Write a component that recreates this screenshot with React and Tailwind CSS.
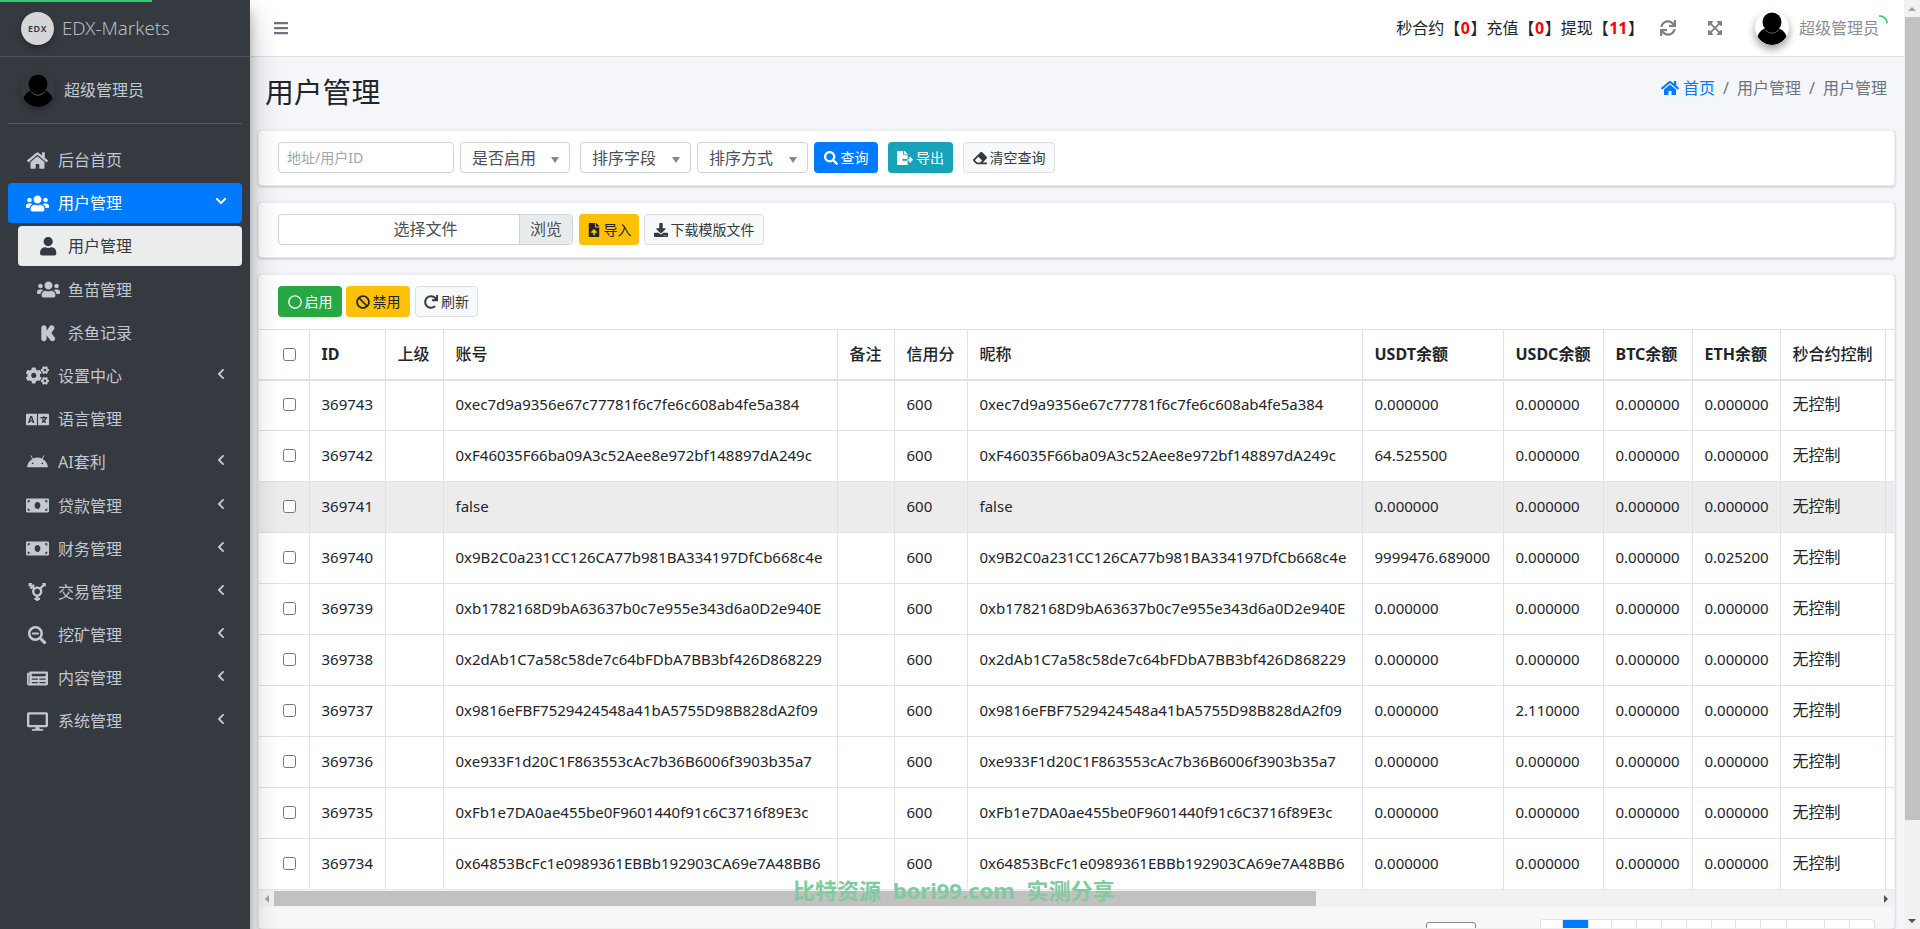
import React from "react";
import {
  FaHome, FaUsers, FaChevronDown, FaChevronLeft, FaUser, FaKickstarterK, FaCogs, FaLanguage, FaAndroid,
  FaMoneyBill, FaTransgenderAlt, FaSearchMinus, FaNewspaper, FaDesktop, FaSearch, FaFileExport, FaEraser,
  FaFileUpload, FaDownload, FaRegCircle, FaBan, FaRedo, FaSync, FaExpandArrowsAlt, FaBars,
} from "react-icons/fa";

function Avatar({ className }) {
  return (
    <svg viewBox="0 0 34 34" className={className}>
      <defs>
        <clipPath id="avclip"><circle cx="17" cy="17" r="17" /></clipPath>
      </defs>
      <g clipPath="url(#avclip)">
        <ellipse cx="17" cy="27" rx="14.5" ry="11" fill="#000" />
        <circle cx="17" cy="11" r="9.5" fill="#000" />
        <path d="M10 18.5c2 2.6 4.400 3.600 7 3.600s5-1 7-3.600" fill="none" stroke="#8a8a8a" strokeWidth="0.7" />
      </g>
    </svg>
  );
}

const iconBox = new Map([
  [FaHome, "w-[21px] h-[21px]"],
  [FaUsers, "w-[23px] h-[23px]"],
  [FaCogs, "w-[23px] h-[23px]"],
  [FaLanguage, "w-[23px] h-[23px]"],
  [FaMoneyBill, "w-[23px] h-[23px]"],
  [FaAndroid, "w-[21px] h-[21px]"],
  [FaNewspaper, "w-[21px] h-[21px]"],
  [FaDesktop, "w-[21px] h-[21px]"],
]);

const Ic = ({ I }) => <I className={iconBox.get(I) || "w-[18.4px] h-[18.4px]"} />;

function NavItem({ icon: I, label, chevron, active }) {
  return (
    <div className={`h-[40px] mb-[3.2px] mx-[8px] rounded-[4px] flex items-center pl-[18px] pr-[15px] ${active ? "bg-[#007bff] text-white" : "text-[#c2c7d0]"}`}>
      <span className="w-[23px] flex justify-center shrink-0"><Ic I={I} /></span>
      <span className="ml-[9px] flex-1 text-[16px] leading-[24px]">{label}</span>
      {chevron === "left" && <FaChevronLeft className="w-[12px] h-[12px] -translate-y-[2px]" />}
      {chevron === "down" && <FaChevronDown className="w-[12px] h-[12px] -translate-y-[2px]" />}
    </div>
  );
}

function SubItem({ icon: I, label, active }) {
  return (
    <div className={`h-[40px] mb-[3.2px] ml-[18px] mr-[8px] rounded-[4px] flex items-center pl-[18px] ${active ? "bg-[#ebedec] text-[#343a40]" : "text-[#c2c7d0]"}`}>
      <span className="w-[24px] flex justify-center shrink-0"><Ic I={I} /></span>
      <span className="ml-[8px] text-[16px] leading-[24px]">{label}</span>
    </div>
  );
}

function Sidebar() {
  return (
    <aside className="w-[250px] shrink-0 bg-[#343a40] relative z-10 shadow-[0_14px_28px_rgba(0,0,0,0.25),0_10px_10px_rgba(0,0,0,0.22)] h-full overflow-hidden">
      <div className="absolute left-0 top-0 h-[2px] w-[152px] bg-[#2ecc71]" />
      <div className="h-[57px] border-b border-[#4b545c] flex items-center pl-[21px]">
        <div className="w-[33px] h-[33px] rounded-full bg-[#d5d6d7] flex items-center justify-center shadow-[0_3px_6px_rgba(0,0,0,0.3)]">
          <span className="text-[9px] leading-none tracking-[0.6px] text-[#333] font-semibold">EDX</span>
        </div>
        <span className="ml-[8px] text-[18.7px] font-light text-[#b8bbbe] leading-[28px]">EDX-Markets</span>
      </div>
      <div className="h-[67px] mx-[8px] border-b border-[#4f5962] flex items-center pl-[13px]">
        <Avatar className="w-[34px] h-[34px] rounded-full shadow-[0_3px_6px_rgba(0,0,0,0.3)]" />
        <span className="ml-[9px] text-[16px] text-[#c2c7d0]">超级管理员</span>
      </div>
      <nav className="pt-[16px]">
        <NavItem icon={FaHome} label="后台首页" />
        <NavItem icon={FaUsers} label="用户管理" chevron="down" active />
        <SubItem icon={FaUser} label="用户管理" active />
        <SubItem icon={FaUsers} label="鱼苗管理" />
        <SubItem icon={FaKickstarterK} label="杀鱼记录" />
        <NavItem icon={FaCogs} label="设置中心" chevron="left" />
        <NavItem icon={FaLanguage} label="语言管理" />
        <NavItem icon={FaAndroid} label="AI套利" chevron="left" />
        <NavItem icon={FaMoneyBill} label="贷款管理" chevron="left" />
        <NavItem icon={FaMoneyBill} label="财务管理" chevron="left" />
        <NavItem icon={FaTransgenderAlt} label="交易管理" chevron="left" />
        <NavItem icon={FaSearchMinus} label="挖矿管理" chevron="left" />
        <NavItem icon={FaNewspaper} label="内容管理" chevron="left" />
        <NavItem icon={FaDesktop} label="系统管理" chevron="left" />
      </nav>
    </aside>
  );
}

function TopBar() {
  const Red = ({ children }) => <b className="text-[#ff0000] font-bold mx-[0.5px]">{children}</b>;
  return (
    <header className="h-[57px] shrink-0 bg-white border-b border-[#dee2e6] flex items-center justify-between relative">
      <FaBars className="ml-[23px] w-[16px] h-[16px] text-[#6c757d]" />
      <div className="flex items-center pr-[25px]">
        <span className="text-[16px] text-[#212529] whitespace-nowrap">秒合约【<Red>0</Red>】充值【<Red>0</Red>】提现【<Red>11</Red>】</span>
        <FaSync className="ml-[16px] w-[16px] h-[16px] text-[#7a8086]" />
        <FaExpandArrowsAlt className="ml-[31px] w-[16px] h-[16px] text-[#7a8086]" />
        <Avatar className="ml-[32px] w-[34px] h-[34px] rounded-full shadow-[0_4px_8px_rgba(0,0,0,0.4)]" />
        <span className="ml-[10px] text-[16px] text-[#8a8f94] whitespace-nowrap">超级管理员</span>
      </div>
      <svg viewBox="0 0 16 16" className="absolute right-[16px] top-[15px] w-[16px] h-[16px]">
        <path d="M7 1.100A7 7 0 0 1 15 8.500" fill="none" stroke="#2ecc71" strokeWidth="1.600" />
      </svg>
    </header>
  );
}

function Select({ label, w }) {
  return (
    <div className={`${w} h-[31px] bg-white border border-[#ced4da] rounded-[4px] flex items-center pl-[11px] pr-[10px] justify-between text-[16px] text-[#495057]`}>
      <span className="whitespace-nowrap">{label}</span>
      <span className="w-0 h-0 border-x-[4px] border-x-transparent border-t-[6px] border-t-[#888] translate-y-[2px]" />
    </div>
  );
}

function Btn({ w, cls, icon: I, iconCls = "w-[14px] h-[14px]", children }) {
  return (
    <div className={`${w} h-[31px] rounded-[4px] flex items-center justify-center gap-[3px] text-[14px] whitespace-nowrap ${cls}`}>
      <I className={iconCls} />
      <span>{children}</span>
    </div>
  );
}

const lightBtn = "bg-[#f8f9fa] border border-[#dcdfe3] text-[#343a40]";

function Card({ className = "", children }) {
  return (
    <div className={`bg-white rounded-[4px] border border-[#eceef0] shadow-[0_1px_3px_rgba(0,0,0,0.22)] ml-[8px] mr-[9px] ${className}`}>{children}</div>
  );
}

const addr = [
  "0xec7d9a9356e67c77781f6c7fe6c608ab4fe5a384",
  "0xF46035F66ba09A3c52Aee8e972bf148897dA249c",
  "false",
  "0x9B2C0a231CC126CA77b981BA334197DfCb668c4e",
  "0xb1782168D9bA63637b0c7e955e343d6a0D2e940E",
  "0x2dAb1C7a58c58de7c64bFDbA7BB3bf426D868229",
  "0x9816eFBF7529424548a41bA5755D98B828dA2f09",
  "0xe933F1d20C1F863553cAc7b36B6006f3903b35a7",
  "0xFb1e7DA0ae455be0F9601440f91c6C3716f89E3c",
  "0x64853BcFc1e0989361EBBb192903CA69e7A48BB6",
];
const rows = addr.map((a, i) => ({
  id: 369743 - i,
  a,
  usdt: { 1: "64.525500", 3: "9999476.689000" }[i] || "0.000000",
  usdc: i === 6 ? "2.110000" : "0.000000",
  eth: i === 3 ? "0.025200" : "0.000000",
}));
const widths = ["w-[50px]", "w-[76px]", "w-[58px]", "w-[394px]", "w-[57px]", "w-[73px]", "w-[395px]", "w-[141px]", "w-[100px]", "w-[89px]", "w-[88px]", "w-[105px]", "w-[80px]"];

const Check = () => <span className="block w-[13px] h-[13px] rounded-[2.500px] border border-[#767676] bg-white ml-[12px]" />;

function Table() {
  const th = "border-r border-[#dee2e6] px-[12px] text-left font-bold whitespace-nowrap text-[#212529] text-[16px]";
  const thc = "border-r border-[#dee2e6] px-[12px] text-left font-medium whitespace-nowrap text-[#212529] text-[16px]";
  const td = "border-r border-[#dee2e6] px-[12px] pb-[2px] whitespace-nowrap overflow-hidden text-[#212529]";
  return (
    <div className="overflow-hidden h-[560px]">
      <table className="table-fixed border-collapse w-[1706px] text-[15px]">
        <colgroup>
          {widths.map((w, i) => <col key={i} className={w} />)}
        </colgroup>
        <thead>
          <tr className="h-[50px] border-t border-b-2 border-[#dee2e6]">
            <th className={th}><Check /></th>
            <th className={th}>ID</th>
            <th className={thc}>上级</th>
            <th className={thc}>账号</th>
            <th className={thc}>备注</th>
            <th className={thc}>信用分</th>
            <th className={thc}>昵称</th>
            <th className={th}>USDT余额</th>
            <th className={th}>USDC余额</th>
            <th className={th}>BTC余额</th>
            <th className={th}>ETH余额</th>
            <th className={thc}>秒合约控制</th>
            <th className={th}></th>
          </tr>
        </thead>
        <tbody>
          {rows.map((r, i) => (
            <tr key={r.id} className={`h-[51px] border-b border-[#dee2e6] ${i === 2 ? "bg-[#ececec]" : "bg-white"}`}>
              <td className={td}><Check /></td>
              <td className={td}>{r.id}</td>
              <td className={td}></td>
              <td className={td}>{r.a}</td>
              <td className={td}></td>
              <td className={td}>600</td>
              <td className={td}>{r.a}</td>
              <td className={td}>{r.usdt}</td>
              <td className={td}>{r.usdc}</td>
              <td className={td}>0.000000</td>
              <td className={td}>{r.eth}</td>
              <td className={`${td} text-[16px]`}>无控制</td>
              <td className={td}></td>
            </tr>
          ))}
        </tbody>
      </table>
    </div>
  );
}

function HScroll() {
  return (
    <div className="h-[18px] bg-[#f1f1f1] border-t border-[#e8e8e8] flex items-center">
      <span className="w-[15px] flex justify-center"><span className="w-0 h-0 border-y-[4px] border-y-transparent border-r-[4px] border-r-[#a3a3a3]" /></span>
      <div className="w-[1042px] h-[15px] bg-[#c1c1c1]" />
      <span className="flex-1" />
      <span className="w-[16px] flex justify-center"><span className="w-0 h-0 border-y-[4px] border-y-transparent border-l-[4px] border-l-[#505050]" /></span>
    </div>
  );
}

const pageCells = ["w-[23px]", "w-[26px]", "w-[23px]", "w-[25px]", "w-[25px]", "w-[25px]", "w-[25px]", "w-[24px]", "w-[25px]", "w-[26px]", "w-[38px]", "w-[25px]", "w-[25px]"];

function Footer() {
  return (
    <div className="h-[40px] bg-[#f7f7f7] pl-[1167px] pt-[12px] flex items-start">
      <div className="w-[50px] h-[30px] bg-white border border-[#888] rounded-[3px] mt-[3px]" />
      <div className="ml-[64px] flex">
        {pageCells.map((w, i) => (
          <div key={i} className={`${w} h-[30px] border-r border-t border-[#dee2e6] ${i === 0 ? "border-l rounded-tl-[4px] bg-white" : i === 1 ? "bg-[#007bff]" : "bg-white"} ${i === 12 ? "rounded-tr-[4px]" : ""}`} />
        ))}
      </div>
    </div>
  );
}

function PageScrollbar() {
  return (
    <div className="w-[16px] shrink-0 h-full bg-[#f1f1f1] flex flex-col items-center">
      <span className="h-[17px] flex items-center"><span className="w-0 h-0 border-x-[4px] border-x-transparent border-b-[4px] border-b-[#a3a3a3]" /></span>
      <div className="w-[15px] h-[803px] bg-[#c1c1c1]" />
      <span className="flex-1" />
      <span className="h-[17px] flex items-center"><span className="w-0 h-0 border-x-[4px] border-x-transparent border-t-[4px] border-t-[#505050]" /></span>
    </div>
  );
}

export default function App() {
  return (
    <div className="h-screen w-full overflow-hidden flex bg-[#f4f6f9] [font-family:'Noto_Sans','Noto_Sans_CJK_SC',sans-serif] relative">
      <Sidebar />
      <main className="flex-1 min-w-0 flex flex-col h-full overflow-hidden">
        <TopBar />
        <div className="h-[73px] shrink-0 flex items-center justify-between pl-[15px] pr-[17px] pb-[4px]">
          <h1 className="text-[28.8px] leading-[34px] text-[#212529] font-normal">用户管理</h1>
          <div className="flex items-center text-[16px] text-[#6c757d] -translate-y-[4px]">
            <FaHome className="w-[18px] h-[18px] text-[#007bff]" />
            <span className="ml-[4px] text-[#007bff]">首页</span>
            <span className="mx-[8px]">/</span>
            <span>用户管理</span>
            <span className="mx-[8px]">/</span>
            <span>用户管理</span>
          </div>
        </div>

        <Card className="h-[56px] shrink-0 flex items-start pt-[11px] pl-[19px]">
          <div className="w-[176px] h-[31px] bg-white border border-[#ced4da] rounded-[4px] flex items-center pl-[8px] text-[14px] text-[#a0a5aa]">地址/用户ID</div>
          <div className="ml-[6px]"><Select label="是否启用" w="w-[110px]" /></div>
          <div className="ml-[10px]"><Select label="排序字段" w="w-[111px]" /></div>
          <div className="ml-[6px]"><Select label="排序方式" w="w-[111px]" /></div>
          <div className="ml-[6px]"><Btn w="w-[64px]" cls="bg-[#007bff] text-white" icon={FaSearch}>查询</Btn></div>
          <div className="ml-[10px]"><Btn w="w-[65px]" cls="bg-[#17a2b8] text-white" icon={FaFileExport} iconCls="w-[16px] h-[16px]">导出</Btn></div>
          <div className="ml-[10px]"><Btn w="w-[92px]" cls={lightBtn} icon={FaEraser}>清空查询</Btn></div>
        </Card>

        <Card className="h-[56px] shrink-0 mt-[16px] flex items-start pt-[11px] pl-[19px]">
          <div className="w-[295px] h-[31px] bg-white border border-[#ced4da] rounded-[4px] flex overflow-hidden text-[16px] text-[#495057]">
            <span className="flex-1 text-center leading-[29px] pl-[53px]">选择文件</span>
            <span className="w-[53px] bg-[#e9ecef] text-center leading-[29px] border-l border-[#ced4da]">浏览</span>
          </div>
          <div className="ml-[6px]"><Btn w="w-[60px]" cls="bg-[#ffc107] text-[#212529]" icon={FaFileUpload}>导入</Btn></div>
          <div className="ml-[5px]"><Btn w="w-[120px]" cls={lightBtn} icon={FaDownload}>下载模版文件</Btn></div>
        </Card>

        <Card className="mt-[16px] flex-1 min-h-0 overflow-hidden">
          <div className="h-[54px] flex items-start pt-[11px] pl-[19px]">
            <Btn w="w-[64px]" cls="bg-[#28a745] text-white" icon={FaRegCircle}>启用</Btn>
            <div className="ml-[4px]"><Btn w="w-[64px]" cls="bg-[#ffc107] text-[#212529]" icon={FaBan}>禁用</Btn></div>
            <div className="ml-[5px]"><Btn w="w-[63px]" cls={lightBtn} icon={FaRedo}>刷新</Btn></div>
          </div>
          <Table />
          <HScroll />
          <Footer />
        </Card>
      </main>
      <PageScrollbar />
      <div className="absolute left-[793px] top-[875px] z-20 text-[22px] font-bold leading-[30px] [word-spacing:6px] text-[#7fcb9f] whitespace-nowrap pointer-events-none">比特资源 bori99.com 实测分享</div>
    </div>
  );
}
